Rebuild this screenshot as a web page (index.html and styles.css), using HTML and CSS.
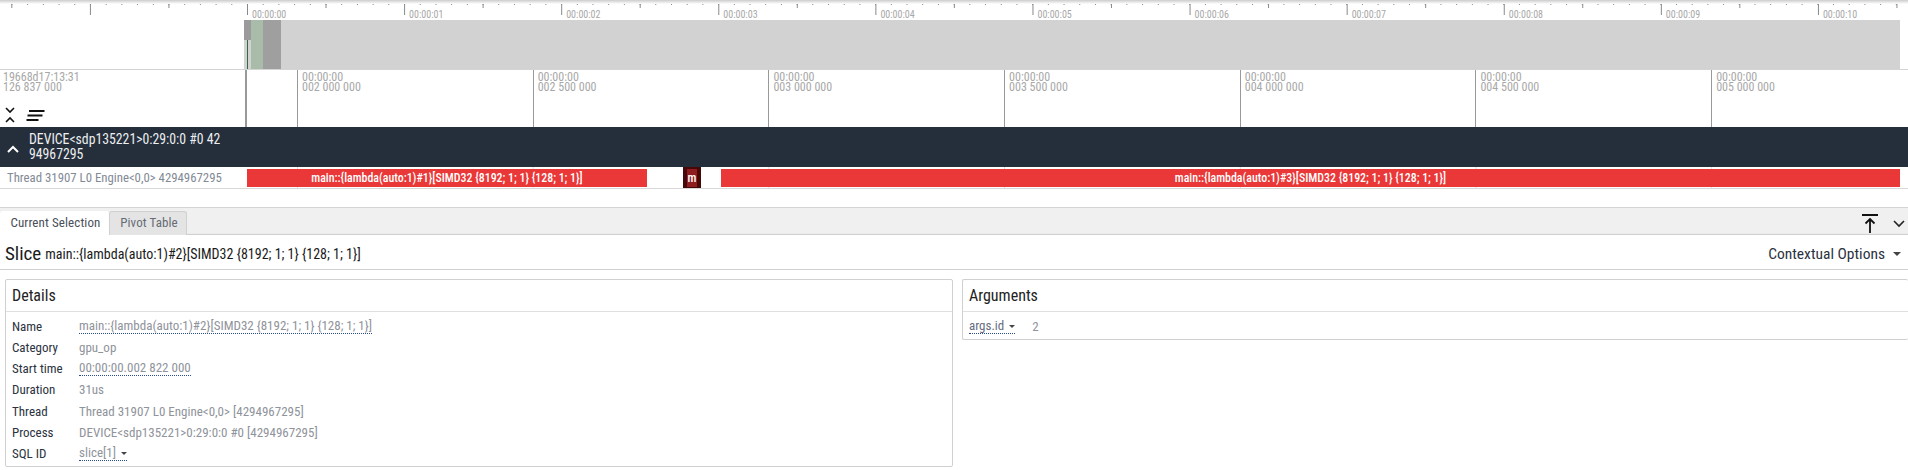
FILE: index.html
```html
<!DOCTYPE html>
<html lang="en">
<head>
    <meta charset="UTF-8">
    <title>Trace Viewer</title>
    <link rel="stylesheet" href="styles.css">
</head>
<body>
    <div class="ruler">
        <span>00:00:00</span><span>00:00:01</span><span>00:00:02</span><span>00:00:03</span><span>00:00:04</span><span>00:00:05</span><span>00:00:06</span><span>00:00:07</span><span>00:00:08</span><span>00:00:09</span><span>00:00:10</span>
    </div>

    <div class="overview">
        <div class="overview-plot">
            <div class="handle"></div>
            <div class="viewport"></div>
            <div class="shade"></div>
        </div>
    </div>

    <div class="time-header">
        <div class="time-left">
            <div class="time-origin">19668d17:13:31<br>126 837 000</div>
            <div class="time-tools">
                <svg class="tool-chevrons" width="10" height="16" viewBox="0 0 10 16"><path d="M1 1l4 4 4-4M1 15l4-4 4 4" fill="none" stroke="#111" stroke-width="1.6"/></svg>
                <svg class="tool-lines" width="19" height="11" viewBox="0 0 19 11"><path d="M3 1h15.500M1.500 5.500h15M0.500 10h12" fill="none" stroke="#111" stroke-width="1.800"/></svg>
            </div>
        </div>
        <div class="time-grid">
            <div class="time-cell">00:00:00<br>002 000 000</div>
            <div class="time-cell">00:00:00<br>002 500 000</div>
            <div class="time-cell">00:00:00<br>003 000 000</div>
            <div class="time-cell">00:00:00<br>003 500 000</div>
            <div class="time-cell">00:00:00<br>004 000 000</div>
            <div class="time-cell">00:00:00<br>004 500 000</div>
            <div class="time-cell">00:00:00<br>005 000 000</div>
        </div>
    </div>

    <div class="process-header">
        <svg class="process-chevron" width="12" height="8" viewBox="0 0 12 8"><path d="M1 7l5-5 5 5" fill="none" stroke="#fff" stroke-width="2"/></svg>
        <div class="process-name">DEVICE&lt;sdp135221&gt;0:29:0:0 #0 42<br>94967295</div>
    </div>

    <div class="track">
        <div class="track-name">Thread 31907 L0 Engine&lt;0,0&gt; 4294967295</div>
        <div class="track-slices">
            <div class="slice slice-first">main::{lambda(auto:1)#1}[SIMD32 {8192; 1; 1} {128; 1; 1}]</div>
            <div class="slice slice-selected">m</div>
            <div class="slice slice-last">main::{lambda(auto:1)#3}[SIMD32 {8192; 1; 1} {128; 1; 1}]</div>
        </div>
    </div>

    <div class="tabs">
        <div class="tab tab-active">Current Selection</div>
        <div class="tab">Pivot Table</div>
        <div class="tab-tools">
            <svg width="16" height="19" viewBox="0 0 16 19"><path d="M0 1h16M8 19V6M3.500 9.500L8 5l4.500 4.500" fill="none" stroke="#111" stroke-width="1.800"/></svg>
            <svg width="12" height="8" viewBox="0 0 12 8"><path d="M1 1l5 5 5-5" fill="none" stroke="#222" stroke-width="1.600"/></svg>
        </div>
    </div>

    <div class="slice-head">
        <span class="slice-word">Slice</span>
        <span class="slice-title">main::{lambda(auto:1)#2}[SIMD32 {8192; 1; 1} {128; 1; 1}]</span>
        <span class="options">Contextual Options <i class="caret"></i></span>
    </div>

    <div class="panels">
        <section class="panel panel-details">
            <h3>Details</h3>
            <div class="rows">
                <div class="row"><b>Name</b><span class="link">main::{lambda(auto:1)#2}[SIMD32 {8192; 1; 1} {128; 1; 1}]</span></div>
                <div class="row"><b>Category</b><span>gpu_op</span></div>
                <div class="row"><b>Start time</b><span class="link">00:00:00.002 822 000</span></div>
                <div class="row"><b>Duration</b><span>31us</span></div>
                <div class="row"><b>Thread</b><span>Thread 31907 L0 Engine&lt;0,0&gt; [4294967295]</span></div>
                <div class="row"><b>Process</b><span>DEVICE&lt;sdp135221&gt;0:29:0:0 #0 [4294967295]</span></div>
                <div class="row"><b>SQL ID</b><span class="link">slice[1] <i class="caret caret-small"></i></span></div>
            </div>
        </section>
        <section class="panel panel-args">
            <h3>Arguments</h3>
            <div class="rows">
                <div class="row arg-row"><b class="link">args.id <i class="caret caret-small"></i></b><span>2</span></div>
            </div>
        </section>
    </div>
</body>
</html>
```

FILE: styles.css
```css
* {
    box-sizing: border-box;
}
body {
    margin: 0;
    width: 1908px;
    height: 470px;
    overflow: hidden;
    background: #fff;
    font-family: "Roboto Condensed", Roboto, sans-serif;
    font-size: 13px;
    color: #222;
}

/* top ruler */
.ruler {
    display: flex;
    height: 20px;
    padding-left: 247px;
    background:
        linear-gradient(#ccc, #fff) 0 0 / 100% 4px no-repeat,
        linear-gradient(90deg, #888 1px, transparent 1px) 247px 0 / 157.1px 15px repeat-x,
        linear-gradient(90deg, #888 1px, transparent 1px) 325.5px 0 / 157.1px 8px repeat-x,
        linear-gradient(90deg, #888 1px, transparent 1px) 247px 0 / 15.71px 5px repeat-x;
}
.ruler span {
    flex: 0 0 157.1px;
    padding: 9px 0 0 5px;
    font-size: 10px;
    line-height: 11px;
    color: #a8a8a8;
}

/* overview */
.overview {
    height: 50px;
    padding: 0 8px 0 244px;
    border-bottom: 1px solid #d4d4d4;
}
.overview-plot {
    display: flex;
    height: 49px;
    background: #d2d2d2;
}
.handle {
    position: relative;
    width: 7px;
    height: 20px;
    background: #9b9b9b;
}
.handle::after {
    content: "";
    position: absolute;
    left: 3px;
    top: 20px;
    width: 1px;
    height: 29px;
    background: #2f6b3c;
}
.viewport {
    width: 12px;
    background: #a9bcaa;
}
.shade {
    width: 18px;
    background: #9f9f9f;
}

/* time labels */
.time-header {
    display: flex;
    height: 57px;
}
.time-left {
    flex: 0 0 247px;
    border-right: 2px solid #999;
    padding: 2px 0 0 3px;
}
.time-origin, .time-cell {
    font-size: 12px;
    line-height: 10px;
    color: #a8a8a8;
}
.time-tools {
    display: flex;
    align-items: center;
    gap: 11px;
    margin: 15px 0 0 2px;
}
.time-grid {
    display: flex;
    flex: 1;
    min-width: 0;
    padding-left: 50px;
}
.time-cell {
    flex: 0 0 235.700px;
    border-left: 1px solid #999;
    padding: 2px 0 0 4px;
}

/* process header */
.process-header {
    display: flex;
    align-items: center;
    height: 40px;
    background: #252e3b;
    color: #eceef0;
}
.process-chevron {
    margin: 4px 10px 0 7px;
}
.process-name {
    font-size: 13.750px;
    line-height: 15px;
}

/* track */
.track {
    display: flex;
    height: 22px;
    border-bottom: 1px solid #d8d8d8;
}
.track-name {
    flex: 0 0 247px;
    padding: 3px 0 0 7px;
    font-size: 12.800px;
    line-height: 16px;
    color: #838a96;
    white-space: nowrap;
}
.track-slices {
    display: flex;
    flex: 1;
    padding-right: 8px;
    background: linear-gradient(90deg, #ddd 1px, transparent 1px) 50px 0 / 235.700px 100% repeat-x;
}
.slice {
    margin: 2px 0 1px;
    background: #ea3737;
    color: #fff;
    font-size: 11.900px;
    font-weight: 500;
    line-height: 18px;
    text-align: center;
    white-space: nowrap;
}
.slice-first {
    width: 400px;
}
.slice-selected {
    width: 18px;
    margin: 0 20px 0 36px;
    background: #8f1d1f;
    border: solid #470808;
    border-width: 2px 4px 1px;
}
.slice-last {
    flex: 1;
}

/* tabs */
.tabs {
    display: flex;
    align-items: flex-end;
    height: 28px;
    margin-top: 18px;
    background: #f0f0f0;
    border-top: 1px solid #d4d4d4;
    box-shadow: inset 0 -2px 1px -1px #ccc;
}
.tab {
    flex: none;
    width: 78px;
    height: 24px;
    padding: 2px 0 0 2px;
    background: #e4e4e4;
    border: 1px solid #d0d0d0;
    border-bottom: 0;
    border-radius: 3px 3px 0 0;
    font-size: 13px;
    letter-spacing: 0.1px;
    line-height: 17px;
    text-align: center;
    color: #666c76;
    white-space: nowrap;
}
.tab-active {
    width: 109px;
    background: #fff;
    color: #4a505a;
    border-color: #fff;
}
.tab-tools {
    display: flex;
    align-items: center;
    gap: 15px;
    margin: 0 3px 2px auto;
}

/* slice heading */
.slice-head {
    display: flex;
    align-items: center;
    height: 35px;
    padding: 3px 7px 0 5px;
    border-bottom: 1px solid #d0d0d0;
    color: #1a1a1a;
}
.slice-word {
    font-size: 19px;
    margin-right: 4px;
}
.slice-title {
    font-size: 14px;
}
.options {
    display: flex;
    align-items: center;
    gap: 8px;
    margin-left: auto;
    font-size: 15.500px;
    color: #2b3240;
}
.caret {
    display: inline-block;
    width: 0;
    height: 0;
    border: 4px solid transparent;
    border-top-color: #444;
    border-bottom: 0;
}
.caret-small {
    border-width: 3px;
    border-bottom: 0;
    margin: 0 0 2px 2px;
}

/* panels */
.panels {
    display: flex;
    align-items: flex-start;
    gap: 9px;
    margin: 9px 0 0 5px;
}
.panel {
    border: 1px solid #d0d0d0;
    border-radius: 2px;
}
.panel-details {
    width: 948px;
    height: 188px;
}
.panel-args {
    flex: 1;
    height: 61px;
    border-right: 0;
}
.panel h3 {
    margin: 0;
    height: 32px;
    padding: 1px 0 0 6px;
    border-bottom: 1px solid #e0e0e0;
    font-size: 16px;
    font-weight: 400;
    line-height: 30px;
    color: #222;
}
.rows {
    padding-top: 4px;
}
.row {
    display: flex;
    height: 21.170px;
    padding-left: 6px;
    font-size: 13px;
    line-height: 21px;
    color: #8f939b;
}
.row b {
    flex: 0 0 67px;
    font-weight: 400;
    color: #2b3240;
}
.link {
    border-bottom: 1px dotted #2a4a8c;
    height: 18px;
    line-height: 20px;
}
.row b.link {
    flex: 0 0 auto;
    margin-right: 17px;
    color: #666c80;
}
```
